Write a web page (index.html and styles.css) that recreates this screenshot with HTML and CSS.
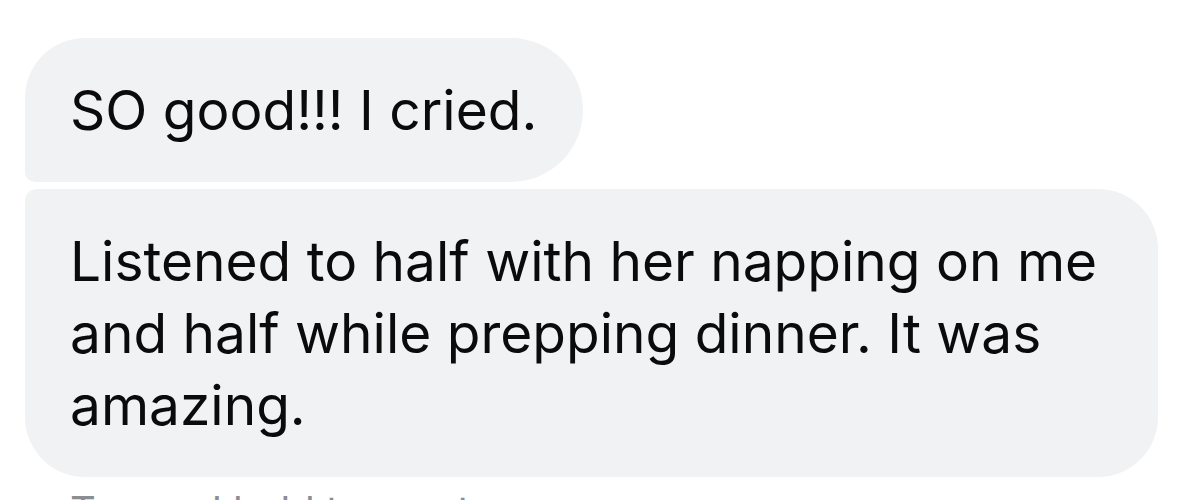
FILE: index.html
```html
<!DOCTYPE html>
<html lang="en">
<head>
<meta charset="utf-8">
<title>Messages</title>
<link rel="stylesheet" href="styles.css">
</head>
<body>
<div class="thread">
  <div class="bubble first">SO good!!! I cried.</div>
  <div class="bubble last">Listened to half with her napping on me and half while prepping dinner. It was amazing.</div>
  <div class="meta">Tap and hold to react</div>
</div>
</body>
</html>
```
FILE: styles.css
```css
html, body {
  margin: 0;
  padding: 0;
  background: #ffffff;
}
body {
  width: 1196px;
  height: 500px;
  overflow: hidden;
  font-family: "Inter", "Liberation Sans", sans-serif;
  color: #0b0b0c;
}
.thread {
  display: flex;
  flex-direction: column;
  align-items: flex-start;
  gap: 7px;
  padding: 38px 0 0 25px;
}
.bubble {
  box-sizing: border-box;
  background: #f1f2f4;
  font-size: 55px;
  letter-spacing: 0;
  line-height: 72px;
  padding: 36px 46px 36px 45px;
  max-width: 1133px;
}
.first {
  border-radius: 60px 72px 72px 10px;
}
.last {
  width: 1133px;
  border-radius: 12px 60px 60px 60px;
}
.meta {
  margin-top: 3px;
  padding-left: 45px;
  font-size: 40px;
  line-height: 48px;
  color: #8a8d91;
}
```
